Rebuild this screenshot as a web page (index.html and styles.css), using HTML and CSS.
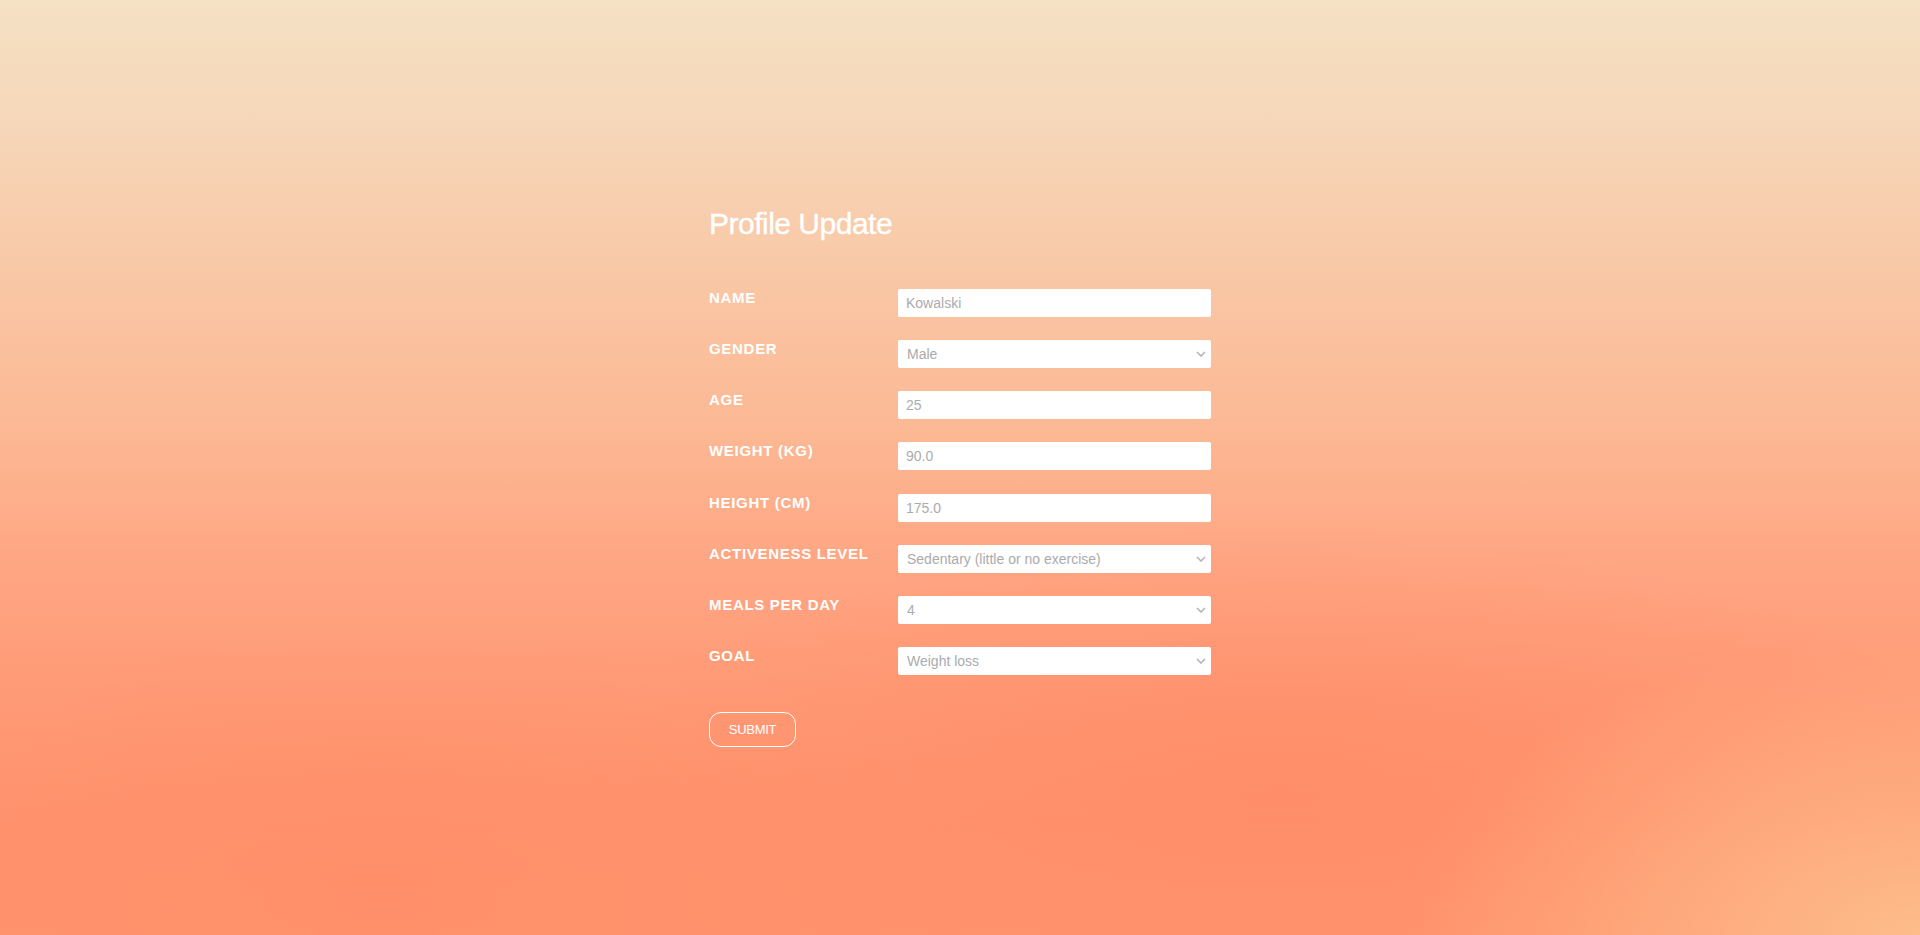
FILE: index.html
```html
<!DOCTYPE html>
<html lang="en">
<head>
<meta charset="utf-8">
<title>Profile Update</title>
<link rel="stylesheet" href="styles.css">
</head>
<body>
<main class="page">
  <section class="panel">
    <h1 class="title">Profile Update</h1>
    <form class="form">
      <div class="row">
        <label class="label" for="name">NAME</label>
        <input class="field" id="name" type="text" value="Kowalski">
      </div>
      <div class="row">
        <label class="label" for="gender">GENDER</label>
        <select class="field select" id="gender"><option>Male</option><option>Female</option></select>
      </div>
      <div class="row">
        <label class="label" for="age">AGE</label>
        <input class="field" id="age" type="text" value="25">
      </div>
      <div class="row">
        <label class="label" for="weight">WEIGHT (KG)</label>
        <input class="field" id="weight" type="text" value="90.0">
      </div>
      <div class="row">
        <label class="label" for="height">HEIGHT (CM)</label>
        <input class="field" id="height" type="text" value="175.0">
      </div>
      <div class="row">
        <label class="label" for="active">ACTIVENESS LEVEL</label>
        <select class="field select" id="active"><option>Sedentary (little or no exercise)</option></select>
      </div>
      <div class="row">
        <label class="label" for="meals">MEALS PER DAY</label>
        <select class="field select" id="meals"><option>4</option></select>
      </div>
      <div class="row">
        <label class="label" for="goal">GOAL</label>
        <select class="field select" id="goal"><option>Weight loss</option></select>
      </div>
      <div class="actions">
        <button class="submit" type="button">SUBMIT</button>
      </div>
    </form>
  </section>
</main>
</body>
</html>
```
FILE: styles.css
```css
html, body {
  margin: 0;
  padding: 0;
  height: 100%;
}

body {
  font-family: "Liberation Sans", Arial, Helvetica, sans-serif;
  min-height: 935px;
  background:
    radial-gradient(ellipse 520px 300px at 100% 100%, rgba(253, 190, 140, 0.95), rgba(253, 190, 140, 0) 100%),
    radial-gradient(ellipse 700px 260px at 1280px 790px, rgba(255, 134, 98, 0.55), rgba(255, 134, 98, 0) 100%),
    radial-gradient(ellipse 600px 260px at 380px 900px, rgba(255, 136, 98, 0.5), rgba(255, 136, 98, 0) 100%),
    linear-gradient(180deg, #f5e1c4 0%, #f6d6b8 14%, #f9c7a5 30%, #fcb894 46%, #ffa683 60%, #ff9a76 74%, #ff9470 88%, #ff9670 100%);
  background-repeat: no-repeat;
  overflow: hidden;
}

.page {
  width: 100%;
  height: 935px;
  display: flex;
  justify-content: center;
}

.panel {
  width: 502px;
  padding-top: 207px;
}

.title {
  margin: 0;
  font-size: 30px;
  font-weight: 400;
  letter-spacing: -0.5px;
  color: #ffffff;
  line-height: 34px;
  -webkit-text-stroke: 0.35px #ffffff;
}

.form {
  margin-top: 48px;
  display: flex;
  flex-direction: column;
  gap: 23.15px;
}

.row {
  display: flex;
  align-items: flex-start;
  height: 28px;
}

.label {
  width: 189px;
  flex: none;
  color: #ffffff;
  font-size: 15px;
  font-weight: 700;
  letter-spacing: 0.7px;
  line-height: 16px;
  padding-top: 1px;
}

.field {
  box-sizing: border-box;
  width: 313px;
  height: 28px;
  border: none;
  border-radius: 2px;
  background-color: #ffffff;
  color: #ababae;
  font-family: "Liberation Sans", Arial, Helvetica, sans-serif;
  font-size: 14px;
  padding: 0 8px;
  margin: 0;
  outline: none;
}

.select {
  -webkit-appearance: none;
  appearance: none;
  padding-left: 9px;
  background-image: url("data:image/svg+xml,%3Csvg xmlns='http://www.w3.org/2000/svg' width='10' height='6' viewBox='0 0 10 6'%3E%3Cpath d='M1 1l4 4 4-4' fill='none' stroke='%23b4b4b8' stroke-width='1.6'/%3E%3C/svg%3E");
  background-repeat: no-repeat;
  background-position: right 5px center;
  background-size: 10px 6px;
}

.actions {
  margin-top: 14px;
}

.submit {
  box-sizing: border-box;
  height: 35px;
  width: 87px;
  padding: 0;
  border: 1px solid #ffffff;
  border-radius: 12px;
  background: transparent;
  color: #ffffff;
  font-family: "Liberation Sans", Arial, Helvetica, sans-serif;
  font-size: 13px;
  letter-spacing: -0.3px;
  cursor: pointer;
}
```
